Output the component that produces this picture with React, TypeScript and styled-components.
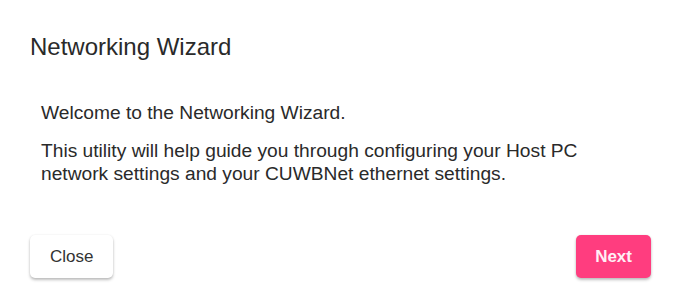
import React from 'react';
import styled, { createGlobalStyle } from 'styled-components';

const GlobalStyle = createGlobalStyle`
  html, body {
    margin: 0;
    padding: 0;
    background: #ffffff;
  }
  body {
    font-family: "Liberation Sans", Arial, sans-serif;
  }
`;

const Dialog = styled.div`
  width: 682px;
  height: 289px;
  box-sizing: border-box;
  background: #fff;
  display: flex;
  flex-direction: column;
  padding-top: 32px;
`;

const Title = styled.h2`
  margin: 0;
  padding: 0 30px;
  font-size: 24px;
  font-weight: 400;
  line-height: 29px;
  color: #2a2a2a;
`;

const Content = styled.div`
  padding: 40px 41px 0;
  color: #2a2a2a;
  font-size: 19.2px;
  line-height: 23px;
`;

const Paragraph = styled.p`
  margin: 0 0 15px;
  &:last-child {
    margin-bottom: 0;
  }
`;

const Actions = styled.div`
  display: flex;
  justify-content: space-between;
  padding: 50px 31px 0 30px;
`;

const Button = styled.button<{ $primary?: boolean }>`
  height: 43px;
  padding: 0 ${(p) => (p.$primary ? '19px' : '20px')};
  border: none;
  border-radius: 5px;
  font-family: "Liberation Sans", Arial, sans-serif;
  font-size: 17px;
  font-weight: ${(p) => (p.$primary ? 600 : 400)};
  background: ${(p) => (p.$primary ? '#ff3d7f' : '#ffffff')};
  color: ${(p) => (p.$primary ? '#fff0f6' : '#333')};
  box-shadow: 0 2px 3px rgba(0, 0, 0, 0.25), 0 0 2px rgba(0, 0, 0, 0.08);
  cursor: pointer;
`;

export default function App() {
  return (
    <>
      <GlobalStyle />
      <Dialog>
        <Title>Networking Wizard</Title>
        <Content>
          <Paragraph>Welcome to the Networking Wizard.</Paragraph>
          <Paragraph>
            This utility will help guide you through configuring your Host PC
            <br />
            network settings and your CUWBNet ethernet settings.
          </Paragraph>
        </Content>
        <Actions>
          <Button>Close</Button>
          <Button $primary>Next</Button>
        </Actions>
      </Dialog>
    </>
  );
}
